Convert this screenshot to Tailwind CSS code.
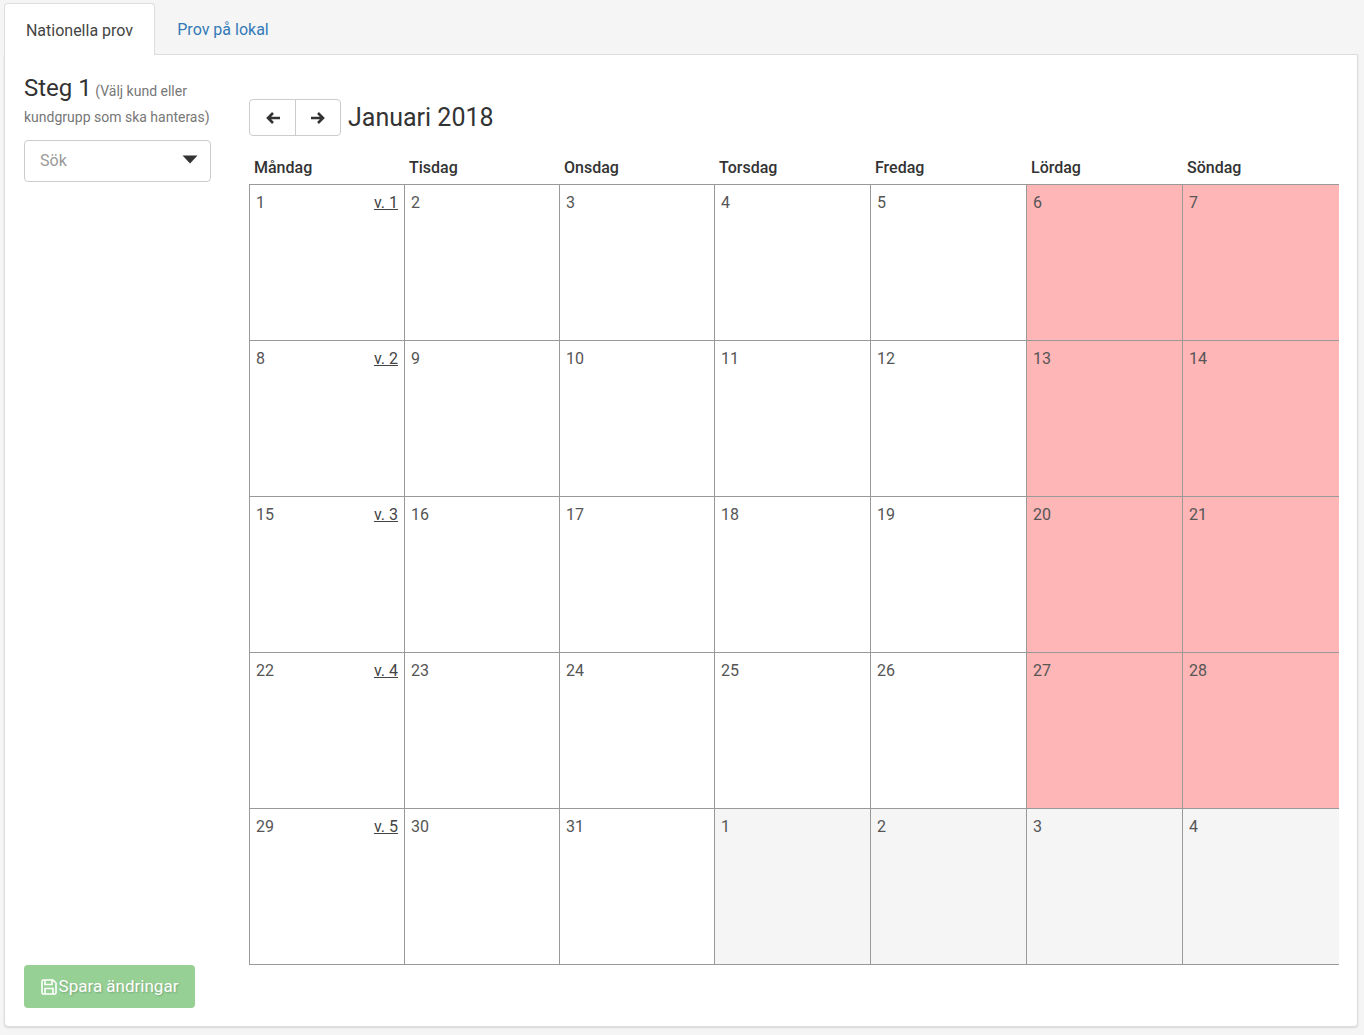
<!DOCTYPE html>
<html lang="sv">
<head>
<meta charset="utf-8">
<title>Kalender</title>
<script src="https://cdn.jsdelivr.net/npm/@tailwindcss/browser@4"></script>
</head>
<body class="bg-[#f5f5f5] font-['Roboto',sans-serif] text-[#555] text-[16px] h-[1035px] overflow-hidden">
<div class="pt-[3px] pl-[4px] pr-[6px] h-[1035px]">
  <nav class="flex h-[52px] relative z-10">
    <a class="w-[151px] h-[52px] bg-white border border-[#ddd] border-b-0 rounded-t-[4px] flex items-center justify-center text-[#444] text-[16px] pt-[2px]">Nationella prov</a>
    <a class="w-[136px] h-[51px] flex items-center justify-center text-[#337ab7] text-[16px] pt-[3px]">Prov på lokal</a>
  </nav>
  <main class="bg-white border border-[#ddd] rounded-b-[4px] shadow-[0_1px_2px_rgba(0,0,0,0.12)] h-[973px] -mt-px flex pl-[19px] pt-[18px] pb-[18px]">
    <aside class="w-[187px] flex flex-col justify-between shrink-0">
      <div>
        <div class="leading-[26px] text-[14px] text-[#777]"><span class="text-[24px] text-[#333] leading-[30px]">Steg 1</span> <span>(Välj kund eller kundgrupp som ska hanteras)</span></div>
        <div class="mt-[10px] h-[42px] border border-[#ccc] rounded-[4px] flex items-center justify-between pl-[15px] pr-[12px] text-[#999]">
          <span>Sök</span>
          <svg width="16" height="9" viewBox="0 0 16 9" class="mb-[3px]"><path d="M0.5 0.5h15L8 8.5z" fill="#333"/></svg>
        </div>
      </div>
      <button class="w-[171px] h-[43px] bg-[#96d095] rounded-[4px] text-white text-[17px] flex items-center justify-center gap-[2px] [text-shadow:1px_1px_2px_rgba(0,0,0,0.2)]">
        <svg width="16" height="16" viewBox="0 0 16 16" fill="none" stroke="#fff" stroke-width="1.6"><path d="M1 2.2C1 1.5 1.5 1 2.2 1h9.8L15 4v9.8c0 .7-.5 1.2-1.2 1.2H2.2C1.500 15 1 14.500 1 13.800z"/><path d="M4 1v4.500h7V1M4 15V9.500h8V15"/></svg>
        <span>Spara ändringar</span>
      </button>
    </aside>
    <section class="ml-[38px] w-[1090px] pt-[26px]">
      <div class="flex items-center h-[37px]">
        <div class="flex w-[92px] h-[37px] border border-[#ccc] rounded-[4px]">
          <div class="w-[46px] flex items-center justify-center border-r border-[#ccc]">
            <svg width="14" height="12" viewBox="0 0 14 12" fill="none" stroke="#333" stroke-width="2.600"><path d="M7 1 2 6l5 5M2 6h12"/></svg>
          </div>
          <div class="flex-1 flex items-center justify-center">
            <svg width="14" height="12" viewBox="0 0 14 12" fill="none" stroke="#333" stroke-width="2.600"><path d="M7 1l5 5-5 5M12 6H0"/></svg>
          </div>
        </div>
        <h2 class="ml-[7px] text-[25px] text-[#333] leading-none">Januari 2018</h2>
      </div>
      <div class="grid grid-cols-[155px_155px_155px_156px_156px_156px_157px] mt-[22px] h-[26px] text-[#333] font-medium text-[16px] leading-[20px]">
        <div class="pl-[5px]">Måndag</div><div class="pl-[5px]">Tisdag</div><div class="pl-[5px]">Onsdag</div><div class="pl-[5px]">Torsdag</div><div class="pl-[5px]">Fredag</div><div class="pl-[5px]">Lördag</div><div class="pl-[5px]">Söndag</div>
      </div>
      <div class="grid grid-cols-[155px_155px_155px_156px_156px_156px_157px] auto-rows-[156px] w-[1090px] border-r border-b border-[#999] leading-[20px]">
        <div class="border-l border-t border-[#999] px-[6px] pt-[8px] flex justify-between"><span>1</span><a class="underline text-[#444] pr-[-1px]">v. 1</a></div>
        <div class="border-l border-t border-[#999] px-[6px] pt-[8px]">2</div>
        <div class="border-l border-t border-[#999] px-[6px] pt-[8px]">3</div>
        <div class="border-l border-t border-[#999] px-[6px] pt-[8px]">4</div>
        <div class="border-l border-t border-[#999] px-[6px] pt-[8px]">5</div>
        <div class="border-l border-t border-[#999] px-[6px] pt-[8px] bg-[#ffb6b6]">6</div>
        <div class="border-l border-t border-[#999] px-[6px] pt-[8px] bg-[#ffb6b6]">7</div>

        <div class="border-l border-t border-[#999] px-[6px] pt-[8px] flex justify-between"><span>8</span><a class="underline text-[#444]">v. 2</a></div>
        <div class="border-l border-t border-[#999] px-[6px] pt-[8px]">9</div>
        <div class="border-l border-t border-[#999] px-[6px] pt-[8px]">10</div>
        <div class="border-l border-t border-[#999] px-[6px] pt-[8px]">11</div>
        <div class="border-l border-t border-[#999] px-[6px] pt-[8px]">12</div>
        <div class="border-l border-t border-[#999] px-[6px] pt-[8px] bg-[#ffb6b6]">13</div>
        <div class="border-l border-t border-[#999] px-[6px] pt-[8px] bg-[#ffb6b6]">14</div>

        <div class="border-l border-t border-[#999] px-[6px] pt-[8px] flex justify-between"><span>15</span><a class="underline text-[#444]">v. 3</a></div>
        <div class="border-l border-t border-[#999] px-[6px] pt-[8px]">16</div>
        <div class="border-l border-t border-[#999] px-[6px] pt-[8px]">17</div>
        <div class="border-l border-t border-[#999] px-[6px] pt-[8px]">18</div>
        <div class="border-l border-t border-[#999] px-[6px] pt-[8px]">19</div>
        <div class="border-l border-t border-[#999] px-[6px] pt-[8px] bg-[#ffb6b6]">20</div>
        <div class="border-l border-t border-[#999] px-[6px] pt-[8px] bg-[#ffb6b6]">21</div>

        <div class="border-l border-t border-[#999] px-[6px] pt-[8px] flex justify-between"><span>22</span><a class="underline text-[#444]">v. 4</a></div>
        <div class="border-l border-t border-[#999] px-[6px] pt-[8px]">23</div>
        <div class="border-l border-t border-[#999] px-[6px] pt-[8px]">24</div>
        <div class="border-l border-t border-[#999] px-[6px] pt-[8px]">25</div>
        <div class="border-l border-t border-[#999] px-[6px] pt-[8px]">26</div>
        <div class="border-l border-t border-[#999] px-[6px] pt-[8px] bg-[#ffb6b6]">27</div>
        <div class="border-l border-t border-[#999] px-[6px] pt-[8px] bg-[#ffb6b6]">28</div>

        <div class="border-l border-t border-[#999] px-[6px] pt-[8px] flex justify-between"><span>29</span><a class="underline text-[#444]">v. 5</a></div>
        <div class="border-l border-t border-[#999] px-[6px] pt-[8px]">30</div>
        <div class="border-l border-t border-[#999] px-[6px] pt-[8px]">31</div>
        <div class="border-l border-t border-[#999] px-[6px] pt-[8px] bg-[#f5f5f5]">1</div>
        <div class="border-l border-t border-[#999] px-[6px] pt-[8px] bg-[#f5f5f5]">2</div>
        <div class="border-l border-t border-[#999] px-[6px] pt-[8px] bg-[#f5f5f5]">3</div>
        <div class="border-l border-t border-[#999] px-[6px] pt-[8px] bg-[#f5f5f5]">4</div>
      </div>
    </section>
  </main>
</div>
</body>
</html>
